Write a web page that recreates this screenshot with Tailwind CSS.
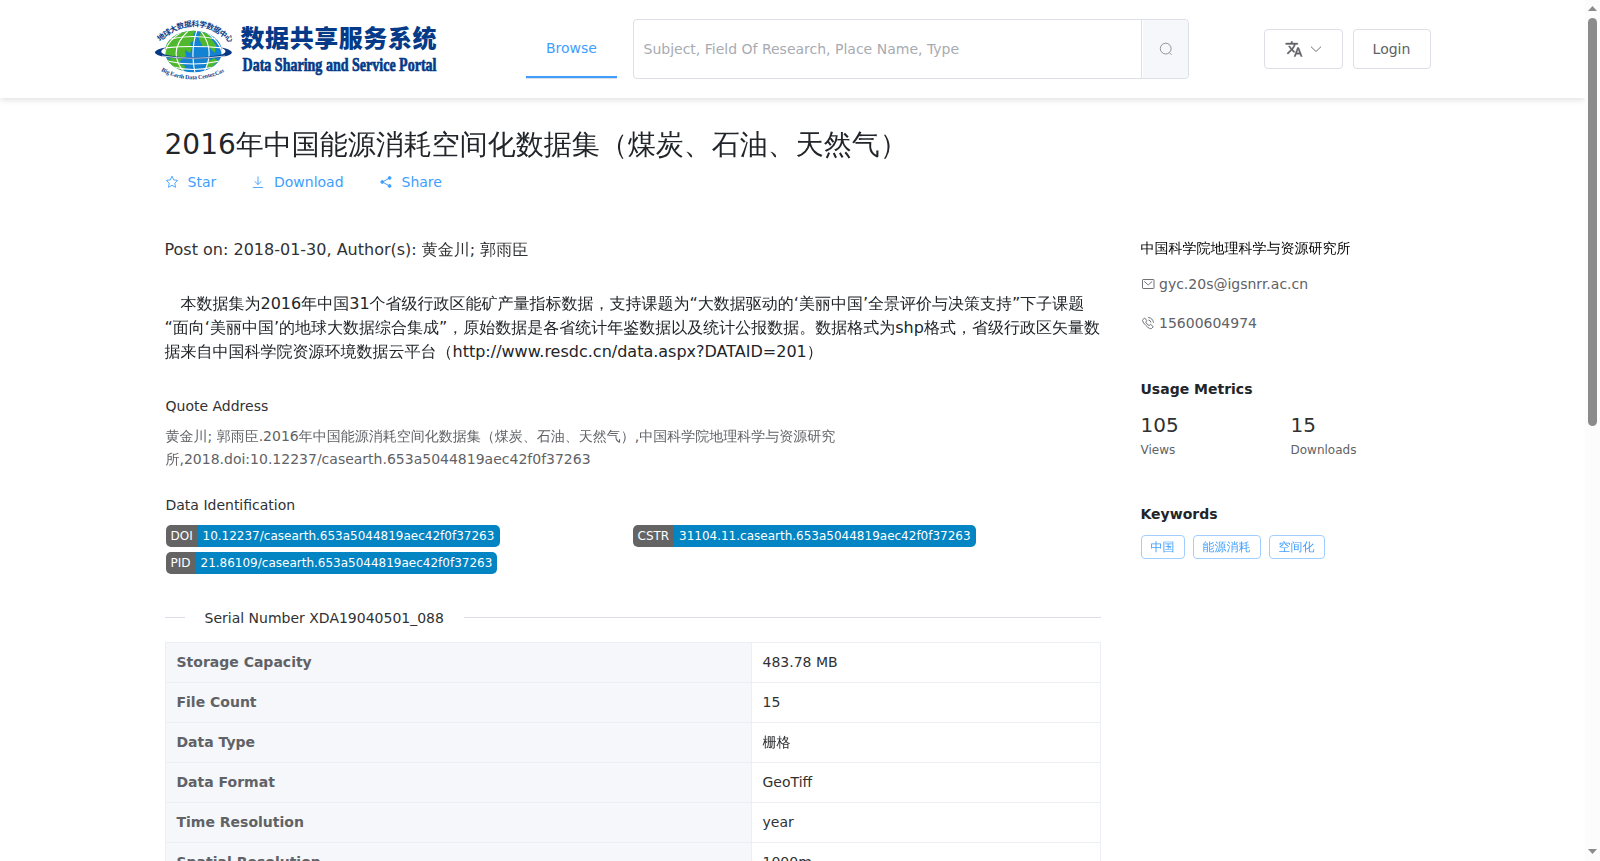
<!DOCTYPE html>
<html lang="zh-CN">
<head>
<meta charset="utf-8">
<title>Data Sharing and Service Portal</title>
<script src="https://cdn.jsdelivr.net/npm/@tailwindcss/browser@4"></script>
</head>
<body class="flex h-[861px] w-[1600px] overflow-hidden bg-white font-['DejaVu_Sans','WenQuanYi_Zen_Hei','Noto_Sans_CJK_SC',sans-serif] text-sm text-[#303133]">
<div class="flex h-full w-[1585px] flex-col overflow-hidden">
  <header class="flex h-[98px] shrink-0 items-start bg-white pl-[153px] shadow-[0_2px_6px_rgba(0,0,0,0.12)]">
    <svg class="mt-3 h-[76px] w-[292px] shrink-0 overflow-visible" viewBox="153 12 292 76">
      <defs>
        <path id="arcTop" d="M160 42Q193 11.500 228 41L236 48"/>
        <path id="arcBot" d="M161 71Q193 88 227 70.500"/>
        <clipPath id="globe"><ellipse cx="193.500" cy="51.500" rx="28.500" ry="20.800"/></clipPath>
      </defs>
      <g clip-path="url(#globe)">
        <rect x="160" y="28" width="68" height="46" fill="#1482d2"/>
        <path d="M164 46L171 36L181 30L196 30L193 35L196 39L190 43L192 48L190 53L185 50L186 56L181 60L178 64L171 59L164 56Z" fill="#4fb82c"/>
        <path d="M201 31L208 34L212 40L216 45L215 53L211 49L208 45L203 47L199 39Z" fill="#4fb82c"/>
        <path d="M207 62L214 58L218 61L212 67L206 69Z" fill="#4fb82c"/>
        <path d="M164 59L174 60L185 66L184 71L174 68Z" fill="#4fb82c"/>
        <g fill="none" stroke="#fff" stroke-width="1.100">
          <path d="M197 30Q190 51 195 73M189 30Q166 51 184 72M200 30Q216 50 204 72M183 31Q153 50 173 70M206 32Q234 52 213 70"/>
          <path d="M170 39Q193 34 217 39M164 48Q193 45 223 48M167 61Q193 67 220 61M173 67Q193 72 214 67"/>
        </g>
      </g>
      <path d="M166 47.500C157 49 153 51.500 156 54C165 60.500 222 60.500 231 54C234 51.500 229 49 221 47.500C232 52.500 223 57 193 57.200C163 57 155 52.500 166 47.500Z" fill="#073a86"/>
      <path d="M162 56Q193 60.500 225 56" fill="none" stroke="#fff" stroke-width=".8"/>
      <text font-family="Noto Sans CJK SC" font-weight="700" font-size="7.600" fill="#0a3c88"><textPath href="#arcTop" textLength="79">地球大数据科学数据中心</textPath></text>
      <text font-family="Liberation Serif" font-weight="700" font-size="6" fill="#0a3c88"><textPath href="#arcBot" textLength="66">Big Earth Data Center,Cas</textPath></text>
      <text x="240.500" y="47" textLength="196" font-family="Noto Sans CJK SC" font-weight="900" font-size="24" fill="#043a87">数据共享服务系统</text>
      <text x="242.500" y="70.500" textLength="194" lengthAdjust="spacingAndGlyphs" font-family="Liberation Serif" font-weight="700" font-size="19" fill="#043a87" stroke="#043a87" stroke-width=".7">Data Sharing and Service Portal</text>
    </svg>
    <nav class="ml-[81px] mt-[19px] flex h-[60px] w-[91px] shrink-0 flex-col border-b border-[#dcdfe6]">
      <a class="flex h-[59px] items-center justify-center border-b-2 border-[#409eff] text-[#409eff]">Browse</a>
    </nav>
    <div class="ml-4 mt-[19px] flex h-[60px] w-[556px] shrink-0 rounded border border-[#dcdfe6]">
      <div class="flex w-[508px] items-center border-r border-[#dcdfe6] pl-[9.500px] text-[#a8abb2]">Subject, Field Of Research, Place Name, Type</div>
      <div class="ml-px flex flex-1 items-center justify-center rounded-r bg-[#f5f7fa]">
        <svg class="size-[14px]" viewBox="0 0 14 14" fill="none" stroke="#909399" stroke-width="1"><circle cx="6.700" cy="6.600" r="5.400"/><path d="M10.300 10.600L12.400 12.700"/></svg>
      </div>
    </div>
    <div class="ml-[75px] mt-[29px] flex gap-[10px] text-[#606266]">
      <button class="flex h-10 w-[79px] items-center gap-[5px] rounded border border-[#dcdfe6] pl-5">
        <svg class="size-[18px] shrink-0" viewBox="0 0 24 24" fill="#606266" stroke="#606266" stroke-width=".5"><path d="M12.870 15.070l-2.540-2.510.030-.030A17.520 17.520 0 0 0 14.070 6H17V4h-7V2H8v2H1v1.990h11.170C11.500 7.920 10.440 9.750 9 11.350 8.070 10.320 7.300 9.190 6.690 8h-2c.73 1.630 1.730 3.170 2.980 4.560l-5.090 5.020L4 19l5-5 3.110 3.110.76-2.040zM18.500 10h-2L12 22h2l1.120-3h4.750L21 22h2l-4.500-12zm-2.620 7l1.620-4.330L19.120 17h-3.240z"/></svg>
        <svg class="ml-[1px] size-[14px] shrink-0" viewBox="0 0 14 14" fill="none" stroke="#606266" stroke-width=".9"><path d="M2 4.700L7 9.500L12 4.700"/></svg>
      </button>
      <button class="h-10 w-[78px] rounded border border-[#dcdfe6] pr-px text-center">Login</button>
    </div>
  </header>

  <main class="pl-[164.500px]">
    <h1 class="mt-[26px] h-[42px] text-[28px] leading-[42px] text-[#212529]">2016年中国能源消耗空间化数据集（煤炭、石油、天然气）</h1>
    <div class="mt-[6px] flex h-5 items-center pl-[0.500px] leading-5 text-[#409eff]">
      <svg class="size-[14px]" viewBox="0 0 14 14" fill="none" stroke="#409eff" stroke-width=".9" stroke-linejoin="round"><path d="M7 1.200L8.700 4.900L12.700 5.400L9.800 8.200L10.500 12.300L7 10.300L3.500 12.300L4.200 8.200L1.300 5.400L5.300 4.900Z"/></svg>
      <span class="ml-[8.500px] w-[63.500px]">Star</span>
      <svg class="size-[14px]" viewBox="0 0 14 14" fill="none" stroke="#409eff" stroke-width=".9"><path d="M7 1.500V9.500M3.600 6.200L7 9.500L10.400 6.200M1.800 12.500H12.200"/></svg>
      <span class="ml-[9px] w-[105px]">Download</span>
      <svg class="size-[14px]" viewBox="0 0 14 14" fill="#409eff" stroke="#409eff"><path d="M10.500 3L3.500 7L10.500 11" fill="none"/><circle cx="10.600" cy="3" r="1.400"/><circle cx="3.300" cy="7" r="1.400"/><circle cx="10.600" cy="11" r="1.400"/></svg>
      <span class="ml-[8.500px]">Share</span>
    </div>
    <div class="mt-[45px] flex gap-10">
      <section class="w-[936px] shrink-0">
        <p class="mt-px h-6 text-base leading-6">Post on: 2018-01-30, Author(s): 黄金川; 郭雨臣</p>
        <p class="mt-[30px] h-[72px] whitespace-nowrap text-base leading-6 text-[#212529]">&#8195;本数据集为2016年中国31个省级行政区能矿产量指标数据，支持课题为“大数据驱动的‘美丽中国’全景评价与决策支持”下子课题<br>“面向‘美丽中国’的地球大数据综合集成”，原始数据是各省统计年鉴数据以及统计公报数据。数据格式为shp格式，省级行政区矢量数<br>据来自中国科学院资源环境数据云平台（http://www.resdc.cn/data.aspx?DATAID=201）</p>
        <h2 class="mt-8 h-5 pl-px leading-5">Quote Address</h2>
        <p class="mt-[9px] h-[46px] whitespace-nowrap pl-px leading-[23px] text-[#606266]">黄金川; 郭雨臣.2016年中国能源消耗空间化数据集（煤炭、石油、天然气）,中国科学院地理科学与资源研究<br>所,2018.doi:10.12237/casearth.653a5044819aec42f0f37263</p>
        <h2 class="mt-6 h-5 pl-px leading-5">Data Identification</h2>
        <div class="mt-[10px] grid grid-cols-[467px_1fr] gap-y-[5px] pl-[1.500px] text-xs leading-[22px] text-white">
          <div class="flex h-[22px]"><span class="w-8 rounded-l-[5px] bg-[#646464] pl-[4.500px]">DOI</span><span class="w-[302px] rounded-r-[5px] bg-[#0384c3] pl-[4.500px]">10.12237/casearth.653a5044819aec42f0f37263</span></div>
          <div class="flex h-[22px]"><span class="w-[41px] rounded-l-[5px] bg-[#646464] pl-[4.500px]">CSTR</span><span class="w-[302px] rounded-r-[5px] bg-[#0384c3] pl-[5px]">31104.11.casearth.653a5044819aec42f0f37263</span></div>
          <div class="flex h-[22px]"><span class="w-[30px] rounded-l-[5px] bg-[#646464] pl-[4.500px]">PID</span><span class="w-[301px] rounded-r-[5px] bg-[#0384c3] pl-[4.500px]">21.86109/casearth.653a5044819aec42f0f37263</span></div>
        </div>
        <div class="mt-[34px] flex h-5 items-center leading-5">
          <span class="-mt-px h-px w-5 bg-[#dcdfe6]"></span>
          <span class="w-[279px] pl-5">Serial Number XDA19040501_088</span>
          <span class="-mt-px h-px flex-1 bg-[#dcdfe6]"></span>
        </div>
        <table class="mt-[14px] w-full table-fixed border-collapse text-left leading-[23px] [&_td]:h-10 [&_td]:border [&_td]:border-[#ebeef5] [&_td]:px-[11px] [&_td]:py-0 [&_th]:h-10 [&_th]:w-[586px] [&_th]:border [&_th]:border-[#ebeef5] [&_th]:bg-[#f5f7fa] [&_th]:px-[11px] [&_th]:py-0 [&_th]:text-[#606266]">
          <tr><th>Storage Capacity</th><td>483.78 MB</td></tr>
          <tr><th>File Count</th><td>15</td></tr>
          <tr><th>Data Type</th><td>栅格</td></tr>
          <tr><th>Data Format</th><td>GeoTiff</td></tr>
          <tr><th>Time Resolution</th><td>year</td></tr>
          <tr><th>Spatial Resolution</th><td>1000m</td></tr>
        </table>
      </section>
      <aside class="w-[300px]">
        <p class="mt-px h-5 leading-5 text-black">中国科学院地理科学与资源研究所</p>
        <p class="mt-4 flex h-5 items-center gap-[4.500px] leading-5 text-[#606266]"><svg class="size-[14px]" viewBox="0 0 14 14" fill="none" stroke="#606266" stroke-width=".9"><rect x="1.500" y="2.500" width="11.500" height="9" rx=".6"/><path d="M3.300 4.400L7.200 8L11.200 4.400"/></svg>gyc.20s@igsnrr.ac.cn</p>
        <p class="mt-[19px] flex h-5 items-center gap-[4.500px] leading-5 text-[#606266]"><svg class="size-[14px]" viewBox="0 0 14 14" fill="none" stroke="#606266" stroke-width=".9" stroke-linejoin="round"><path d="M3.700 2L1.700 3.700Q.8 5.200 4.800 9.400T10.600 12.500L12.300 10.700L9.700 8.400L8.200 9.500Q6.700 9.400 4.800 6.200L5.800 4.600ZM7.200 1.500Q11.800 2 12.500 6.700M7.500 4Q9.600 4.300 10 6.500"/></svg>15600604974</p>
        <h3 class="mt-[46px] h-5 font-bold leading-5 text-[#212529]">Usage Metrics</h3>
        <div class="mt-3 grid grid-cols-[150px_1fr]">
          <div><p class="h-7 text-xl leading-7">105</p><p class="mt-[3px] h-4 text-xs leading-4 text-[#606266]">Views</p></div>
          <div><p class="h-7 text-xl leading-7">15</p><p class="mt-[3px] h-4 text-xs leading-4 text-[#606266]">Downloads</p></div>
        </div>
        <h3 class="mt-[46px] h-5 font-bold leading-5 text-[#212529]">Keywords</h3>
        <div class="mt-[11px] flex gap-2 text-xs leading-[22px] text-[#409eff]">
          <span class="h-6 rounded border border-[#a0cfff] px-[9px]">中国</span>
          <span class="h-6 rounded border border-[#a0cfff] px-[9px]">能源消耗</span>
          <span class="h-6 rounded border border-[#a0cfff] px-[9px]">空间化</span>
        </div>
      </aside>
    </div>
  </main>
</div>
<div class="flex h-full w-[15px] flex-col items-center bg-[#fcfcfc]">
  <svg class="mt-[6px] h-[5px] w-[9px] shrink-0" viewBox="0 0 9 5"><path d="M4.500 0L9 5H0Z" fill="#8b8b8b"/></svg>
  <div class="mt-[7px] h-[408px] w-[9px] shrink-0 rounded-full bg-[#8b8b8b]"></div>
  <svg class="mb-[7px] mt-auto h-[5px] w-[9px] shrink-0" viewBox="0 0 9 5"><path d="M0 0H9L4.500 5Z" fill="#8b8b8b"/></svg>
</div>
</body>
</html>
